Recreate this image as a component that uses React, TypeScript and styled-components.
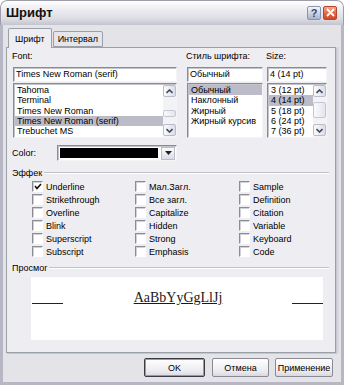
import React from 'react';
import styled, { createGlobalStyle } from 'styled-components';

const Global = createGlobalStyle`
  html, body { margin: 0; padding: 0; background: #ffffff; }
  body { font-family: "Liberation Sans", Arial, sans-serif; font-size: 9px; color: #000; }
  * { box-sizing: border-box; }
`;

const Window = styled.div`
  width: 344px;
  height: 385px;
  display: flex;
  flex-direction: column;
  background: #e4e3e8;
  border-radius: 7px 7px 0 0;
  overflow: hidden;
`;

const TitleBar = styled.div`
  height: 25px;
  flex: none;
  display: flex;
  align-items: center;
  justify-content: space-between;
  padding: 0 6px 1px 5px;
  background: linear-gradient(#ffffff 0%, #ededf2 35%, #dcdce4 75%, #c4c4d0 100%);
  border: 1px solid #9c9cab;
  border-bottom: none;
  border-radius: 7px 7px 0 0;
`;

const Title = styled.div`
  font-size: 13px;
  font-weight: bold;
  color: #111;
`;

const TitleButtons = styled.div`
  display: flex;
  gap: 2px;
`;

const CapButton = styled.div<{ $red?: boolean }>`
  width: 14px;
  height: 14px;
  border-radius: 2px;
  display: flex;
  align-items: center;
  justify-content: center;
  font-size: 11px;
  font-weight: bold;
  border: 1px solid ${(p) => (p.$red ? '#b0482e' : '#8c94ad')};
  background: ${(p) =>
    p.$red
      ? 'linear-gradient(#f6a48c, #e0603c 60%, #cf4a28)'
      : 'linear-gradient(#f4f6fb, #c6cde0 60%, #aab3cc)'};
  color: ${(p) => (p.$red ? '#fff' : '#3b4660')};
`;

const Frame = styled.div`
  flex: 1;
  display: flex;
  flex-direction: column;
  border-left: 3px solid #b6b6c4;
  border-right: 3px solid #b6b6c4;
  border-bottom: 3px solid #b6b6c4;
  padding: 3px 5px 0 3px;
`;

const TabRow = styled.div`
  height: 19px;
  flex: none;
  display: flex;
  align-items: flex-end;
  padding-left: 2px;
`;

const Tab = styled.div<{ $active?: boolean }>`
  position: relative;
  z-index: ${(p) => (p.$active ? 2 : 1)};
  height: ${(p) => (p.$active ? 20 : 16)}px;
  margin-bottom: ${(p) => (p.$active ? -1 : 0)}px;
  padding: 0 ${(p) => (p.$active ? 6 : 4)}px;
  display: flex;
  align-items: center;
  border: 1px solid #9aa0a8;
  border-bottom: ${(p) => (p.$active ? 'none' : '1px solid #9aa0a8')};
  background: ${(p) => (p.$active ? '#eeedf1' : '#e6e5ea')};
  border-radius: 2px 2px 0 0;
  margin-left: ${(p) => (p.$active ? 0 : 1)}px;
`;

const Panel = styled.div`
  flex: 1;
  border: 1px solid #9aa0a8;
  box-shadow: 1px 1px 0 #c6c6d0, 3px 0 0 #d8d8de;
  background: #eeedf1;
  padding: 3px 0 0 6px;
  display: flex;
  flex-direction: column;
`;

const TopRow = styled.div`
  display: flex;
`;

const Column = styled.div<{ $w: number; $ml?: number }>`
  width: ${(p) => p.$w}px;
  margin-left: ${(p) => p.$ml || 0}px;
  display: flex;
  flex-direction: column;
`;

const Label = styled.div`
  height: 11px;
  line-height: 11px;
  margin-bottom: 5px;
  margin-left: -1px;
  white-space: nowrap;
`;

const TextInput = styled.div`
  height: 15px;
  line-height: 13px;
  padding-left: 2px;
  background: #fff;
  border: 1px solid;
  border-color: #8a8a92 #f4f4f4 #f4f4f4 #8a8a92;
  box-shadow: inset 1px 1px 0 #c4c4cc;
  white-space: nowrap;
  overflow: hidden;
`;

const ListBox = styled.div`
  margin-top: 1px;
  height: 55px;
  background: #fff;
  border: 1px solid;
  border-color: #8a8a92 #f4f4f4 #f4f4f4 #8a8a92;
  box-shadow: inset 1px 1px 0 #c4c4cc;
  display: flex;
  padding: 1px 0 0 1px;
  overflow: hidden;
`;

const Items = styled.div`
  flex: 1;
  min-width: 0;
  overflow: hidden;
`;

const Item = styled.div<{ $sel?: boolean }>`
  height: 10.3px;
  line-height: 10.3px;
  padding-left: 2px;
  white-space: nowrap;
  overflow: hidden;
  background: ${(p) => (p.$sel ? '#bcbcc9' : 'transparent')};
`;

const ScrollBar = styled.div`
  width: 13px;
  flex: none;
  display: flex;
  flex-direction: column;
  background: #f3f3f6;
  padding-bottom: 1px;
`;

const ScrollBtn = styled.div`
  height: 12px;
  flex: none;
  border: 1px solid #b9bccb;
  border-radius: 2px;
  background: linear-gradient(90deg, #fbfbfd, #dcdde6);
  display: flex;
  align-items: center;
  justify-content: center;
`;

const Track = styled.div`
  flex: 1;
  display: flex;
  flex-direction: column;
`;

const Thumb = styled.div<{ $top: number; $h: number }>`
  margin-top: ${(p) => p.$top}px;
  height: ${(p) => p.$h}px;
  border: 1px solid #c4c6d2;
  border-radius: 2px;
  background: linear-gradient(90deg, #fbfbfd, #e4e5ec);
`;

const Chevron = ({ up }: { up?: boolean }) => (
  <svg width="7" height="5" viewBox="0 0 7 5">
    <path
      d={up ? 'M0.5 4 L3.5 1 L6.5 4' : 'M0.5 1 L3.5 4 L6.5 1'}
      fill="none"
      stroke="#3c4a6a"
      strokeWidth="1.6"
    />
  </svg>
);

const ColorRow = styled.div`
  margin-top: 7px;
  display: flex;
  align-items: center;
`;

const ColorLabel = styled.div`
  width: 44px;
  margin-left: -1px;
  margin-right: 1px;
`;

const ColorSelect = styled.div`
  width: 120px;
  height: 16px;
  background: #fff;
  border: 1px solid;
  border-color: #8a8a92 #f4f4f4 #f4f4f4 #8a8a92;
  box-shadow: inset 1px 1px 0 #c4c4cc;
  display: flex;
  align-items: center;
  padding: 2px 1px 2px 2px;
  gap: 3px;
`;

const Swatch = styled.div`
  flex: 1;
  height: 10px;
  background: #000;
`;

const DropBtn = styled.div`
  width: 14px;
  height: 13px;
  border: 1px solid #b9bccb;
  background: linear-gradient(#fbfbfd, #dcdde6);
  display: flex;
  align-items: center;
  justify-content: center;
`;

const GroupHeader = styled.div<{ $mt: number }>`
  margin-top: ${(p) => p.$mt}px;
  height: 11px;
  display: flex;
  align-items: center;
  margin-left: -1px;
  margin-right: 6px;
`;

const GroupLine = styled.div`
  flex: 1;
  height: 2px;
  border-top: 1px solid #c2c2cb;
  border-bottom: 1px solid #ffffff;
  margin-left: 2px;
`;

const CheckArea = styled.div`
  margin-top: 2px;
  padding-left: 19px;
  display: flex;
`;

const CheckCol = styled.div<{ $w: number }>`
  width: ${(p) => p.$w}px;
  flex: none;
  display: flex;
  flex-direction: column;
`;

const CheckRow = styled.div`
  height: 13px;
  display: flex;
  align-items: center;
  gap: 3px;
  white-space: nowrap;
`;

const Box = styled.div`
  width: 11px;
  height: 11px;
  flex: none;
  background: #fff;
  border: 1px solid;
  border-color: #8c8c94 #ffffff #ffffff #8c8c94;
  box-shadow: inset 1px 1px 0 #d0d0d8;
  display: flex;
  align-items: center;
  justify-content: center;
`;

const Preview = styled.div`
  margin-top: 4px;
  margin-left: 18px;
  width: 292px;
  height: 63px;
  background: #fff;
  display: flex;
  justify-content: space-between;
  align-items: flex-start;
  padding: 13px 0 0 1px;
`;

const SideLine = styled.div`
  width: 31px;
  height: 1px;
  background: #222;
  margin-top: 13px;
`;

const Sample = styled.div`
  font-family: "Liberation Serif", "Times New Roman", serif;
  font-size: 14px;
  line-height: 16px;
  text-decoration: underline;
  color: #1a1a1a;
  margin-left: 1px;
`;

const ButtonRow = styled.div`
  height: 29px;
  flex: none;
  display: flex;
  align-items: center;
  justify-content: flex-end;
  padding: 0 3px 0 0;
  gap: 6px;
`;

const Button = styled.div<{ $w: number; $def?: boolean }>`
  width: ${(p) => p.$w}px;
  height: 19px;
  display: flex;
  align-items: center;
  justify-content: center;
  border: 1px solid ${(p) => (p.$def ? '#3c3c44' : '#8a8a94')};
  box-shadow: ${(p) => (p.$def ? 'inset 0 0 0 1px #9a9aa6' : 'none')};
  border-radius: 2px;
  background: linear-gradient(#ffffff, #ececf0 70%, #d8d8e0);
  margin-right: ${(p) => (p.$def ? 1 : 0)}px;
`;

const effects = [
  ['Underline', 'Strikethrough', 'Overline', 'Blink', 'Superscript', 'Subscript'],
  ['Мал.Загл.', 'Все загл.', 'Capitalize', 'Hidden', 'Strong', 'Emphasis'],
  ['Sample', 'Definition', 'Citation', 'Variable', 'Keyboard', 'Code'],
];
const colWidths = [103, 104, 90];

export default function App() {
  return (
    <>
      <Global />
      <Window>
        <TitleBar>
          <Title>Шрифт</Title>
          <TitleButtons>
            <CapButton>?</CapButton>
            <CapButton $red>
              <svg width="9" height="9" viewBox="0 0 9 9">
                <path d="M1 1 L8 8 M8 1 L1 8" stroke="#fff" strokeWidth="1.8" />
              </svg>
            </CapButton>
          </TitleButtons>
        </TitleBar>
        <Frame>
          <TabRow>
            <Tab $active>Шрифт</Tab>
            <Tab>Интервал</Tab>
          </TabRow>
          <Panel>
            <TopRow>
              <Column $w={164}>
                <Label>Font:</Label>
                <TextInput>Times New Roman (serif)</TextInput>
                <ListBox>
                  <Items>
                    <Item>Tahoma</Item>
                    <Item>Terminal</Item>
                    <Item>Times New Roman</Item>
                    <Item $sel>Times New Roman (serif)</Item>
                    <Item>Trebuchet MS</Item>
                  </Items>
                  <ScrollBar>
                    <ScrollBtn><Chevron up /></ScrollBtn>
                    <Track><Thumb $top={13} $h={7} /></Track>
                    <ScrollBtn><Chevron /></ScrollBtn>
                  </ScrollBar>
                </ListBox>
              </Column>
              <Column $w={76} $ml={10}>
                <Label>Стиль шрифта:</Label>
                <TextInput>Обычный</TextInput>
                <ListBox>
                  <Items>
                    <Item $sel>Обычный</Item>
                    <Item>Наклонный</Item>
                    <Item>Жирный</Item>
                    <Item>Жирный курсив</Item>
                  </Items>
                </ListBox>
              </Column>
              <Column $w={60} $ml={4}>
                <Label>Size:</Label>
                <TextInput>4 (14 pt)</TextInput>
                <ListBox>
                  <Items>
                    <Item>3 (12 pt)</Item>
                    <Item $sel>4 (14 pt)</Item>
                    <Item>5 (18 pt)</Item>
                    <Item>6 (24 pt)</Item>
                    <Item>7 (36 pt)</Item>
                  </Items>
                  <ScrollBar>
                    <ScrollBtn><Chevron up /></ScrollBtn>
                    <Track><Thumb $top={5} $h={16} /></Track>
                    <ScrollBtn><Chevron /></ScrollBtn>
                  </ScrollBar>
                </ListBox>
              </Column>
            </TopRow>
            <ColorRow>
              <ColorLabel>Color:</ColorLabel>
              <ColorSelect>
                <Swatch />
                <DropBtn>
                  <svg width="7" height="4" viewBox="0 0 7 4">
                    <path d="M0 0 L7 0 L3.5 4 Z" fill="#222" />
                  </svg>
                </DropBtn>
              </ColorSelect>
            </ColorRow>
            <GroupHeader $mt={6}>
              Эффек
              <GroupLine />
            </GroupHeader>
            <CheckArea>
              {effects.map((col, ci) => (
                <CheckCol key={ci} $w={colWidths[ci]}>
                  {col.map((name, ri) => (
                    <CheckRow key={name}>
                      <Box>
                        {ci === 0 && ri === 0 && (
                          <svg width="8" height="7" viewBox="0 0 8 7">
                            <path d="M1 3 L3 5.5 L7 1" fill="none" stroke="#111" strokeWidth="1.6" />
                          </svg>
                        )}
                      </Box>
                      {name}
                    </CheckRow>
                  ))}
                </CheckCol>
              ))}
            </CheckArea>
            <GroupHeader $mt={4}>
              Просмог
              <GroupLine />
            </GroupHeader>
            <Preview>
              <SideLine />
              <Sample>AaBbYyGgLlJj</Sample>
              <SideLine />
            </Preview>
          </Panel>
          <ButtonRow>
            <Button $w={61} $def>OK</Button>
            <Button $w={57}>Отмена</Button>
            <Button $w={58}>Применение</Button>
          </ButtonRow>
        </Frame>
      </Window>
    </>
  );
}
